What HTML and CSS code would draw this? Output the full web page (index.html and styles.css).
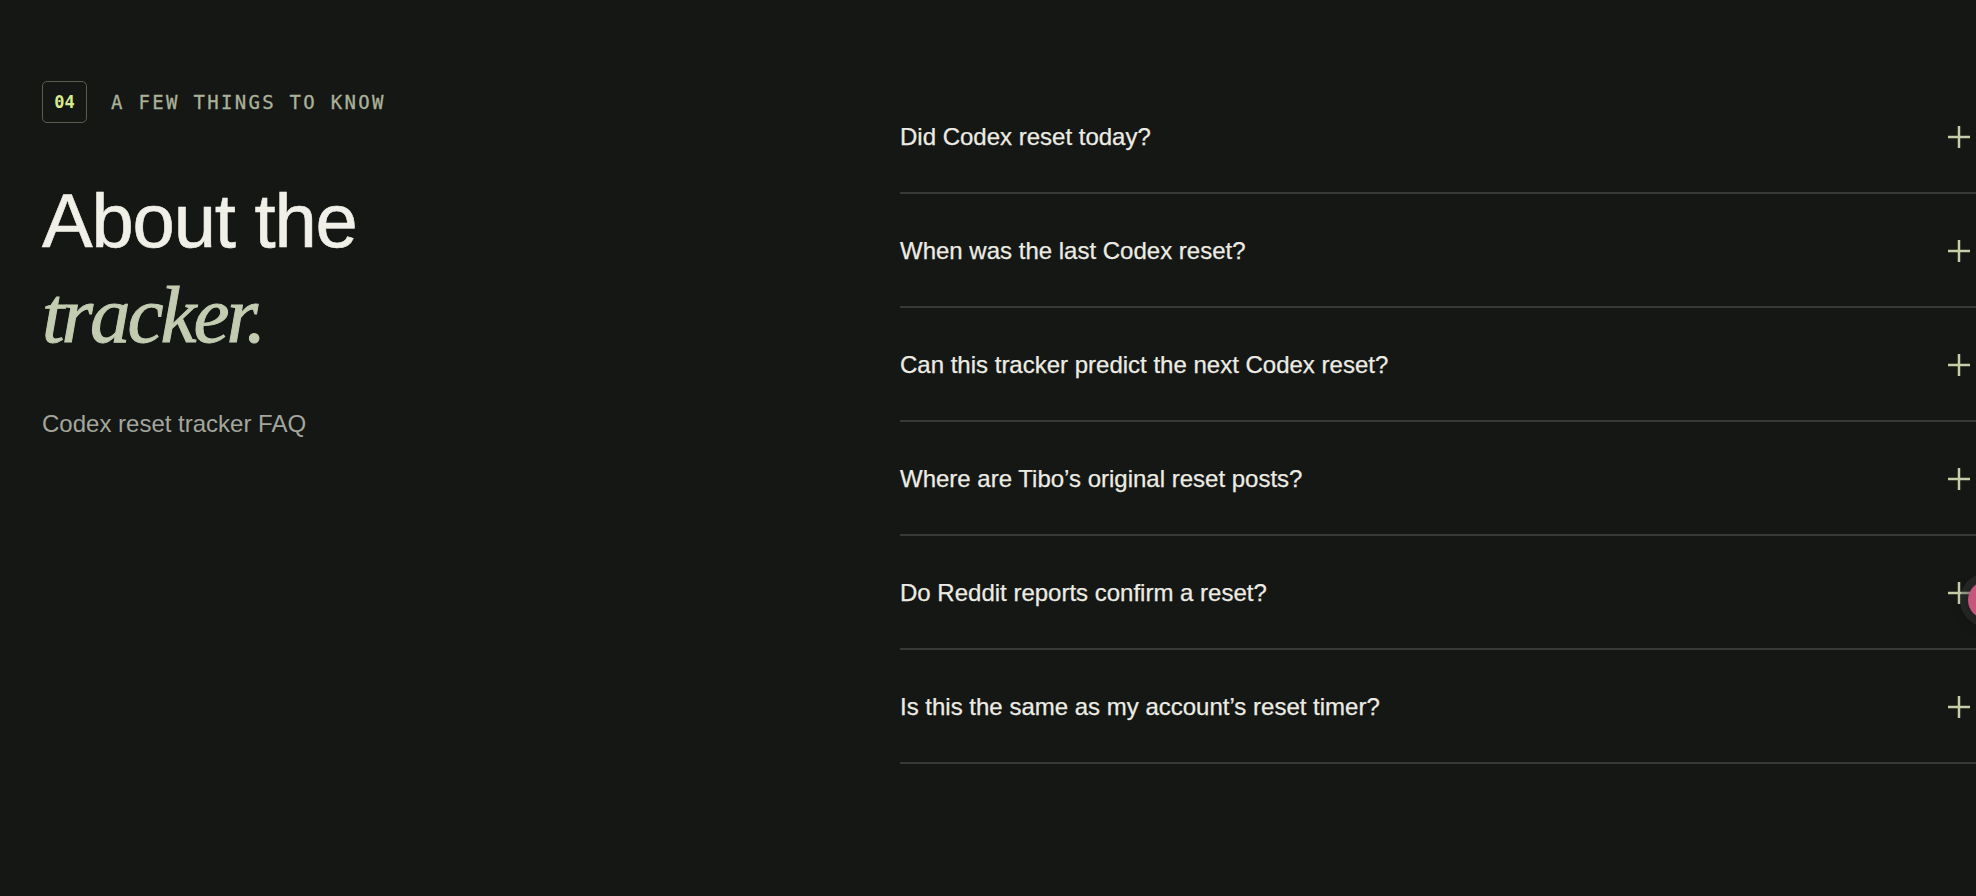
FILE: index.html
```html
<!DOCTYPE html>
<html lang="en">
<head>
<meta charset="utf-8">
<title>About the tracker</title>
<link rel="stylesheet" href="styles.css">
</head>
<body>
<main class="page">
  <section class="intro">
    <div class="eyebrow">
      <span class="badge">04</span>
      <span class="eyebrow-label">A FEW THINGS TO KNOW</span>
    </div>
    <h2 class="title">About the<br><em class="title-accent">tracker.</em></h2>
    <p class="subtitle">Codex reset tracker FAQ</p>
  </section>
  <section class="faq">
    <div class="faq-item"><span class="faq-q">Did Codex reset today?</span><svg class="plus" viewBox="0 0 22 22"><path d="M11 0V22M0 11H22"/></svg></div>
    <div class="faq-item"><span class="faq-q">When was the last Codex reset?</span><svg class="plus" viewBox="0 0 22 22"><path d="M11 0V22M0 11H22"/></svg></div>
    <div class="faq-item"><span class="faq-q">Can this tracker predict the next Codex reset?</span><svg class="plus" viewBox="0 0 22 22"><path d="M11 0V22M0 11H22"/></svg></div>
    <div class="faq-item"><span class="faq-q">Where are Tibo’s original reset posts?</span><svg class="plus" viewBox="0 0 22 22"><path d="M11 0V22M0 11H22"/></svg></div>
    <div class="faq-item"><span class="faq-q">Do Reddit reports confirm a reset?</span><svg class="plus" viewBox="0 0 22 22"><path d="M11 0V22M0 11H22"/></svg></div>
    <div class="faq-item"><span class="faq-q">Is this the same as my account’s reset timer?</span><svg class="plus" viewBox="0 0 22 22"><path d="M11 0V22M0 11H22"/></svg></div>
  </section>
</main>
<div class="float-dot"></div>
</body>
</html>
```

FILE: styles.css
```css
html, body {
  margin: 0;
  padding: 0;
  background: #151714;
  height: 100%;
  overflow: hidden;
}

body {
  font-family: "Liberation Sans", Arial, sans-serif;
  color: #ecece4;
}

.page {
  display: grid;
  grid-template-columns: 858px 1fr;
  padding: 80px 0 0 42px;
}

.intro {
  padding-top: 1px;
}

.eyebrow {
  display: flex;
  align-items: center;
  gap: 24px;
}

.badge {
  box-sizing: border-box;
  width: 45px;
  height: 42px;
  border: 1.5px solid #595d4d;
  border-radius: 5px;
  display: flex;
  align-items: center;
  justify-content: center;
  font-family: "DejaVu Sans Mono", monospace;
  font-size: 17px;
  font-weight: 700;
  color: #d8ec8e;
}

.eyebrow-label {
  font-family: "DejaVu Sans Mono", monospace;
  font-size: 19px;
  letter-spacing: 2.3px;
  color: #aab19a;
  -webkit-text-stroke: 0.3px #aab19a;
}

.title {
  margin: 50px 0 0;
  font-weight: 400;
  font-size: 76px;
  line-height: 95px;
  letter-spacing: -1.2px;
  color: #f0f0e8;
  -webkit-text-stroke: 0.6px #f0f0e8;
}

.title-accent {
  font-family: "Liberation Serif", "Times New Roman", serif;
  font-style: italic;
  font-size: 81px;
  letter-spacing: -3px;
  color: #c3ccb0;
  -webkit-text-stroke: 1px #c3ccb0;
}

.subtitle {
  margin: 43px 0 0;
  font-size: 24px;
  line-height: 36px;
  color: #a3a69d;
}

.faq {
  display: flex;
  flex-direction: column;
}

.faq-item {
  display: flex;
  align-items: center;
  justify-content: space-between;
  padding: 39px 6px 37px 0;
  border-bottom: 2px solid #383a35;
}

.faq-q {
  font-size: 24px;
  line-height: 36px;
  color: #ecece4;
  -webkit-text-stroke: 0.25px #ecece4;
}

.plus {
  width: 22px;
  height: 22px;
  fill: none;
  stroke: #c5cea8;
  stroke-width: 2.5;
}

.float-dot {
  position: fixed;
  left: 1968px;
  top: 581px;
  width: 38px;
  height: 38px;
  border-radius: 50%;
  background: #c8557c;
  box-shadow: 0 0 0 8px rgba(70, 70, 70, 0.35), 0 4px 14px rgba(0, 0, 0, 0.5);
}
```
